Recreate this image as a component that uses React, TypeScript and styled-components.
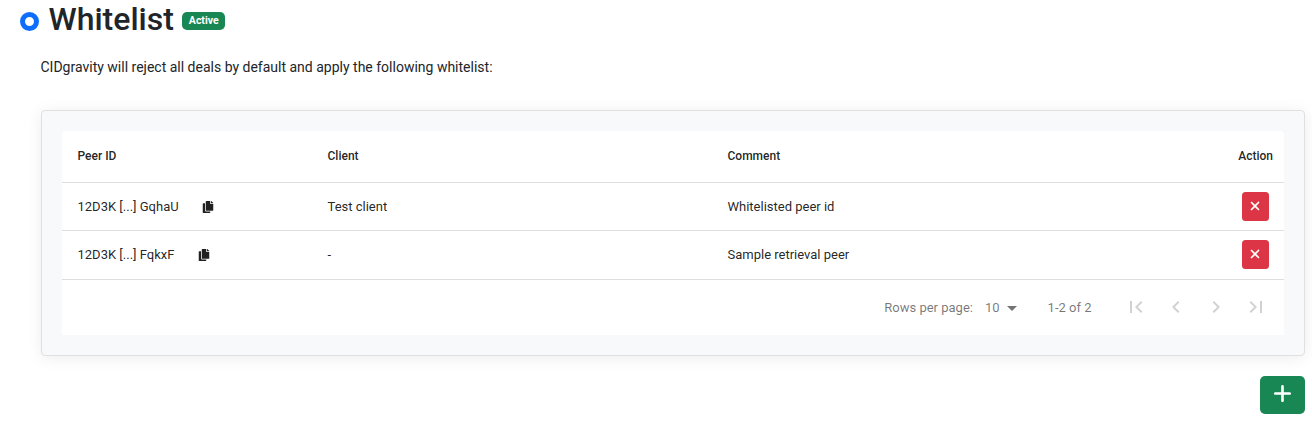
import React from "react";
import styled, { createGlobalStyle } from "styled-components";
import { FaCopy } from "react-icons/fa";
import { FaXmark, FaPlus } from "react-icons/fa6";
import { MdFirstPage, MdChevronLeft, MdChevronRight, MdLastPage, MdArrowDropDown } from "react-icons/md";

const GlobalStyle = createGlobalStyle`
  *, *::before, *::after { box-sizing: border-box; }
  body {
    margin: 0;
    background: #fff;
    color: #212529;
    font-family: Roboto, "Liberation Sans", sans-serif;
    font-size: 14px;
    line-height: 1.5;
  }
`;

const Page = styled.main`
  display: flex;
  flex-direction: column;
  height: 432px;
  padding: 0 7px 0 20px;
  overflow: hidden;
`;

const Heading = styled.header`
  display: flex;
  align-items: center;
  height: 40px;
`;

const Radio = styled.span`
  width: 19px;
  height: 19px;
  margin: 3px 9.5px 0 0;
  border: 5px solid #0d6efd;
  border-radius: 50%;
  background: #fff;
`;

const Title = styled.h1`
  margin: 0 8.5px 2px 0;
  font-size: 32px;
  font-weight: 500;
  line-height: 38px;
`;

const Badge = styled.span`
  height: 18px;
  margin-top: 2px;
  padding: 0 6.5px;
  border-radius: 5px;
  background: #198754;
  color: #fff;
  font-size: 10.5px;
  font-weight: 700;
  line-height: 17px;
`;

const Content = styled.section`
  display: flex;
  flex-direction: column;
  padding-left: 21px;
`;

const Description = styled.p`
  margin: 17px 0 32px -0.5px;
  line-height: 21px;
`;

const Card = styled.div`
  height: 246px;
  padding: 20px;
  border: 1px solid #e0e0e1;
  border-radius: 4px;
  background: #f8f9fb;
  box-shadow: 0 2px 16px rgba(0, 0, 0, 0.075);
`;

const Table = styled.div`
  border-radius: 4px 4px 0 0;
  background: #fff;
  font-size: 13px;
`;

const Row = styled.div<{ $head?: boolean; $last?: boolean }>`
  display: grid;
  grid-template-columns: 250px 400px 1fr auto;
  align-items: center;
  height: ${(p) => (p.$head ? 52 : 48)}px;
  padding: 0 ${(p) => (p.$head ? 11 : 15)}px ${(p) => (p.$head || p.$last ? 1 : 0)}px 15.5px;
  border-bottom: ${(p) => (p.$last ? 0 : 1)}px solid #dedede;
  font-size: ${(p) => (p.$head ? 12 : 13)}px;
  font-weight: ${(p) => (p.$head ? 500 : 400)};
  color: rgba(0, 0, 0, 0.87);
`;

const Peer = styled.div`
  display: flex;
  align-items: center;
  gap: 23.2px;
`;

const DeleteButton = styled.button`
  display: flex;
  align-items: center;
  justify-content: center;
  width: 27px;
  height: 29px;
  padding: 0 1px 1px 0;
  border: 0;
  border-radius: 3.5px;
  background: #dc3545;
  color: #fff;
`;

const Footer = styled.footer`
  display: flex;
  align-items: center;
  justify-content: flex-end;
  height: 56px;
  padding-right: 8px;
  border-top: 1px solid #dedede;
  color: rgba(0, 0, 0, 0.54);
`;

const PageSize = styled.div`
  display: flex;
  align-items: center;
  margin: 0 23.5px 0 12px;
  svg { margin-left: 0.5px; }
`;

const Pager = styled.nav`
  display: flex;
  margin-left: 24.5px;
`;

const PageButton = styled.button`
  display: grid;
  place-items: center;
  width: 40px;
  height: 40px;
  padding: 0 0 1px;
  border: 0;
  background: transparent;
  color: rgba(0, 0, 0, 0.18);
`;

const AddButton = styled.button`
  display: flex;
  align-items: center;
  justify-content: center;
  align-self: flex-end;
  width: 45px;
  height: 38px;
  margin-top: 20px;
  padding: 0 0 3px;
  border: 0;
  border-radius: 5px;
  background: #198754;
  color: #fff;
`;

const peers = [
  { id: "12D3K [...] GqhaU", client: "Test client", comment: "Whitelisted peer id" },
  { id: "12D3K [...] FqkxF", client: "-", comment: "Sample retrieval peer" },
];

const pagerIcons = [
  { label: "First page", Icon: MdFirstPage },
  { label: "Previous page", Icon: MdChevronLeft },
  { label: "Next page", Icon: MdChevronRight },
  { label: "Last page", Icon: MdLastPage },
];

export default function App() {
  return (
    <Page>
      <GlobalStyle />
      <Heading>
        <Radio />
        <Title>Whitelist</Title>
        <Badge>Active</Badge>
      </Heading>
      <Content>
        <Description>CIDgravity will reject all deals by default and apply the following whitelist:</Description>
        <Card>
          <Table>
            <Row $head>
              <span>Peer ID</span>
              <span>Client</span>
              <span>Comment</span>
              <span>Action</span>
            </Row>
            {peers.map((peer, i) => (
              <Row key={peer.id} $last={i === peers.length - 1}>
                <Peer>
                  {peer.id}
                  <FaCopy size={12} />
                </Peer>
                <span>{peer.client}</span>
                <span>{peer.comment}</span>
                <DeleteButton aria-label="Delete">
                  <FaXmark size={14} />
                </DeleteButton>
              </Row>
            ))}
            <Footer>
              <span>Rows per page:</span>
              <PageSize>
                10
                <MdArrowDropDown size={24} />
              </PageSize>
              <span>1-2 of 2</span>
              <Pager>
                {pagerIcons.map(({ label, Icon }) => (
                  <PageButton key={label} aria-label={label}>
                    <Icon size={24} />
                  </PageButton>
                ))}
              </Pager>
            </Footer>
          </Table>
        </Card>
        <AddButton aria-label="Add">
          <FaPlus size={21} />
        </AddButton>
      </Content>
    </Page>
  );
}
